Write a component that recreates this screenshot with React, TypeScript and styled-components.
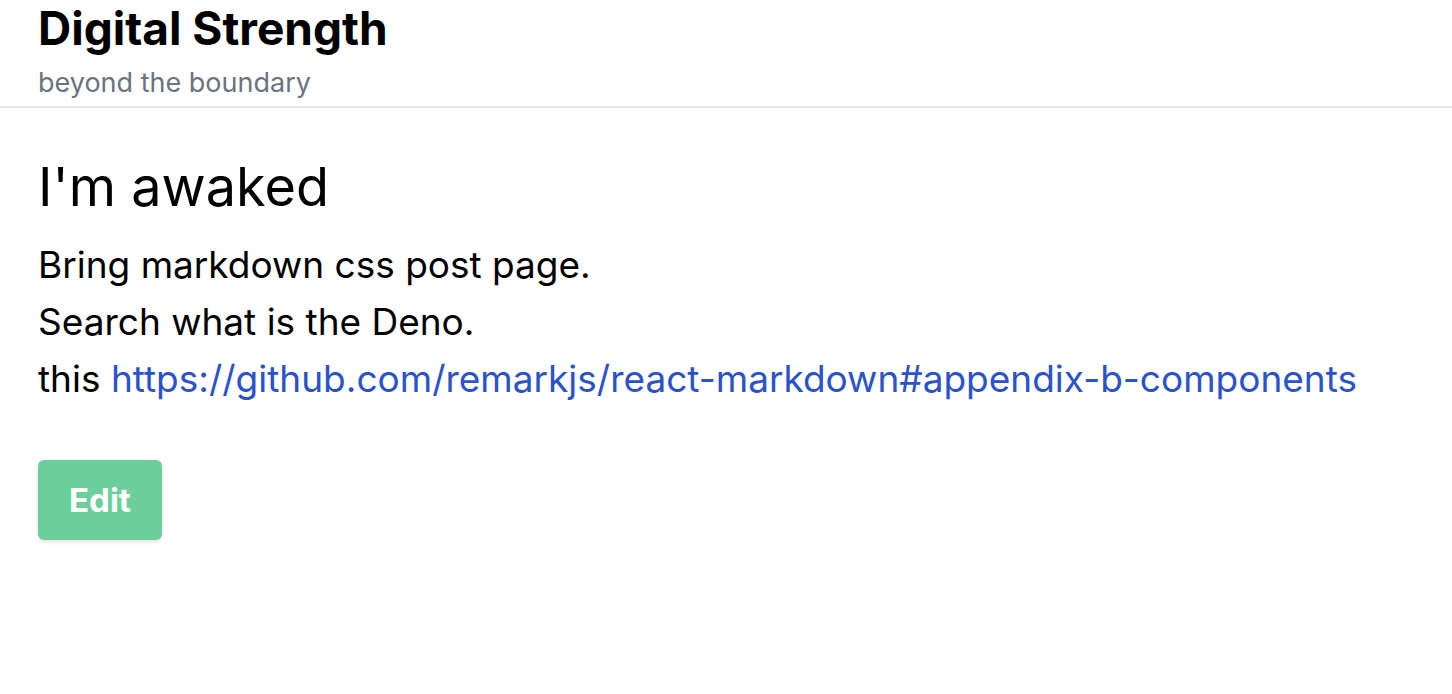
import React from "react";
import styled, { createGlobalStyle } from "styled-components";

const Global = createGlobalStyle`
  html, body { margin: 0; padding: 0; background: #ffffff; }
  body { font-family: Inter, "Noto Sans", sans-serif; color: #000; }
`;

const Header = styled.header`
  display: flex;
  flex-direction: column;
  padding: 0 38px 1px;
  border-bottom: 2px solid #e5e7eb;
`;

const SiteTitle = styled.h1`
  margin: 0;
  font-size: 46px;
  line-height: 57px;
  font-weight: 700;
  letter-spacing: 0;
`;

const Tagline = styled.p`
  margin: 0;
  padding-top: 3px;
  font-size: 27px;
  line-height: 45px;
  color: #6b7280;
`;

const Main = styled.main`
  display: flex;
  flex-direction: column;
  align-items: flex-start;
  padding: 49px 38px;
`;

const PostTitle = styled.h2`
  margin: 0 0 19px;
  font-size: 54px;
  line-height: 60px;
  font-weight: 400;
`;

const Body = styled.div`
  font-size: 37px;
  line-height: 57px;
`;

const Line = styled.p`
  margin: 0;
`;

const Link = styled.a`
  color: #2a52cc;
  text-decoration: none;
`;

const EditButton = styled.button`
  margin-top: 53px;
  width: 124px;
  height: 80px;
  border: none;
  border-radius: 6px;
  background: #6ccf9b;
  color: #fff;
  font-family: Inter, sans-serif;
  font-size: 33px;
  font-weight: 700;
  box-shadow: 0 2px 4px rgba(0, 0, 0, 0.12);
  cursor: pointer;
`;

export default function App() {
  return (
    <>
      <Global />
      <Header>
        <SiteTitle>Digital Strength</SiteTitle>
        <Tagline>beyond the boundary</Tagline>
      </Header>
      <Main>
        <PostTitle>I'm awaked</PostTitle>
        <Body>
          <Line>Bring markdown css post page.</Line>
          <Line>Search what is the Deno.</Line>
          <Line>
            this{" "}
            <Link href="#">https://github.com/remarkjs/react-markdown#appendix-b-components</Link>
          </Line>
        </Body>
        <EditButton>Edit</EditButton>
      </Main>
    </>
  );
}
